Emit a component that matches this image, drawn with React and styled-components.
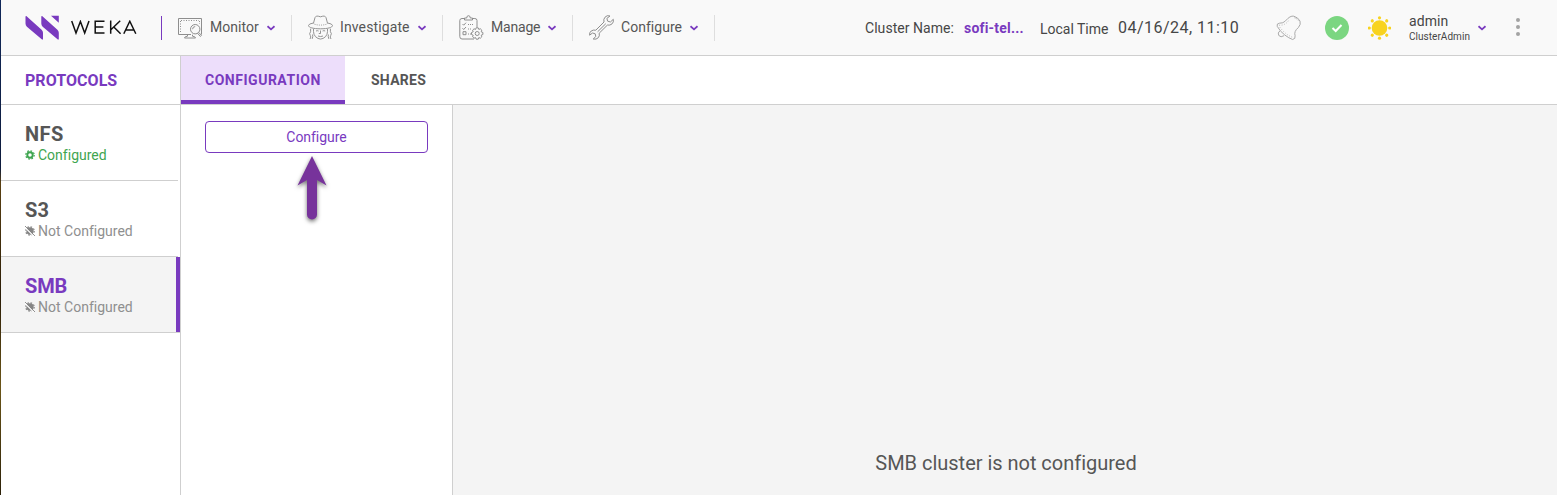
import React from "react";
import styled, { createGlobalStyle, css } from "styled-components";

const purple = "#793abf";
const line = "#cfcfcf";

const Global = createGlobalStyle`
  * { box-sizing: border-box; }
  body { margin: 0; background: #fff; font-family: Roboto, "Noto Sans", sans-serif; color: #565656; overflow: hidden; }
  svg { display: block; flex: none; }
`;

const Page = styled.div`
  display: flex;
  flex-direction: column;
  height: 495px;
  border-left: 1px solid;
  border-image: linear-gradient(#10285a 0, #0d1b3c 34%, #5a4012 37%, #2a1c06 60%, #6b5518 78%, #2b2008 100%) 1;
`;

const Header = styled.header`
  display: flex;
  align-items: center;
  height: 56px;
  flex: none;
  background: #f9f9f9;
  border-bottom: 1px solid ${line};
`;

const Brand = styled.div`
  display: flex;
  align-items: center;
  width: 161px;
  height: 24px;
  padding-left: 24px;
  gap: 12px;
  border-right: 1px solid ${purple};
`;

const Nav = styled.nav`
  display: flex;
  align-items: center;
`;

const NavItem = styled.div`
  display: flex;
  align-items: center;
  width: ${(p) => p.$width}px;
  height: 26px;
  padding-left: 16px;
  border-right: 1px solid #dedede;
`;

const NavLabel = styled.span`
  width: ${(p) => p.$width}px;
  margin: 0 0 2px 7px;
  font-size: 14px;
  line-height: 20px;
  letter-spacing: ${(p) => p.$spacing}px;
  white-space: nowrap;
`;

const Status = styled.div`
  display: flex;
  align-items: flex-start;
  margin-left: 150px;
  padding-top: 2px;
  line-height: 24px;
  white-space: nowrap;
  color: #464646;
`;

const ClusterLabel = styled.span`
  width: 99px;
  font-size: 14px;
  letter-spacing: 0.05px;
`;

const ClusterName = styled.span`
  width: 76px;
  font-size: 14px;
  font-weight: 700;
  letter-spacing: 0.2px;
  color: ${purple};
`;

const TimeLabel = styled.span`
  width: 78px;
  padding-top: 1px;
  font-size: 14px;
  letter-spacing: -0.02px;
`;

const TimeValue = styled.span`
  width: 158px;
  font-size: 16px;
  letter-spacing: 0.48px;
`;

const Tools = styled.div`
  display: flex;
  align-items: center;
`;

const BellSlot = styled.div`
  margin-right: 23px;
`;

const HealthSlot = styled.div`
  margin-right: 19px;
`;

const User = styled.div`
  display: flex;
  flex-direction: column;
  width: 69px;
  margin: 2px 0 0 18px;
  color: #464646;
`;

const UserName = styled.span`
  font-size: 14px;
  line-height: 17px;
  letter-spacing: 0.1px;
`;

const UserRole = styled.span`
  font-size: 10px;
  line-height: 14px;
  letter-spacing: 0.04px;
`;

const MenuSlot = styled.div`
  margin-left: 30px;
`;

const Body = styled.div`
  display: flex;
  flex: 1;
  min-height: 0;
`;

const Sidebar = styled.aside`
  width: 180px;
  flex: none;
  border-right: 1px solid ${line};
`;

const SideTitle = styled.div`
  height: 49px;
  padding-left: 24px;
  border-bottom: 1px solid ${line};
  font-size: 16px;
  font-weight: 700;
  line-height: 49px;
  letter-spacing: 0.05px;
  color: ${purple};
`;

const Protocol = styled.div`
  height: 76px;
  padding: 17px 0 0 24px;
  border-bottom: 1px solid ${line};
  ${(p) =>
    p.$active
      ? css`
          background: #f4f4f4;
          box-shadow: inset -4px 0 ${purple};
        `
      : css`
          margin-right: 2px;
        `}
`;

const ProtocolName = styled.div`
  font-size: 20px;
  font-weight: 700;
  line-height: 24px;
  letter-spacing: ${(p) => p.$spacing}px;
  color: ${(p) => (p.$active ? purple : "#565656")};
`;

const ProtocolState = styled.div`
  display: flex;
  align-items: center;
  gap: 3px;
  font-size: 14px;
  line-height: 18px;
  letter-spacing: 0.01px;
  color: ${(p) => (p.$ok ? "#3fa550" : "#8f8f8f")};
`;

const Main = styled.main`
  display: flex;
  flex: 1;
  flex-direction: column;
`;

const Tabs = styled.div`
  display: flex;
  height: 49px;
  border-bottom: 1px solid ${line};
`;

const Tab = styled.div`
  width: ${(p) => p.$width}px;
  padding-left: ${(p) => p.$pad}px;
  font-size: 14px;
  font-weight: 700;
  line-height: 49px;
  letter-spacing: ${(p) => p.$spacing}px;
  ${(p) =>
    p.$active &&
    css`
      color: ${purple};
      background: #eddefb;
      border-bottom: 4px solid ${purple};
    `}
`;

const Content = styled.div`
  display: flex;
  flex: 1;
`;

const Panel = styled.section`
  display: flex;
  flex-direction: column;
  align-items: center;
  width: 272px;
  padding: 16px 24px;
  border-right: 1px solid ${line};
`;

const ConfigureButton = styled.button`
  width: 223px;
  height: 32px;
  flex: none;
  padding: 0;
  border: 1px solid ${purple};
  border-radius: 4px;
  background: #fff;
  color: ${purple};
  font: 400 14px/30px Roboto, sans-serif;
  letter-spacing: -0.05px;
`;

const Pointer = styled.svg`
  margin: 1px 9px 0 0;
  filter: drop-shadow(0 2px 2px rgba(0, 0, 0, 0.55));
`;

const Empty = styled.section`
  display: flex;
  flex: 1;
  align-items: flex-end;
  justify-content: center;
  padding: 0 0 19px 2px;
  background: #f4f4f4;
  font-size: 20px;
  line-height: 26px;
  letter-spacing: -0.02px;
`;

const Logo = () => (
  <svg width="34" height="25" viewBox="0 0 34 25" fill={purple}>
    <path d="M.5 1.7Q.5.9 1.3 1L16.6 14.8Q18 16.1 18 17.8V24.5H17L1.9 11.7Q.5 10.5.5 8.5ZM16.3 1.7Q16.3.9 17.1 1L32.4 14.8Q33.8 16.1 33.8 17.8V24.5H32.8L17.7 11.7Q16.3 10.5 16.3 8.5ZM26 .8H33.8V7.8Z" />
  </svg>
);

const Wordmark = () => (
  <svg width="66" height="15" viewBox="0 0 66 15" fill="none" stroke="#111" strokeWidth="1.5">
    <path d="m.7 1 4.3 12L9.4 1.5 13.7 13l4.3-12M33.5 1.2h-9.3v11.9h9.3M24.2 7h8.2M39.7.5v13.3M49.2.8l-9.3 9M42.8 7l6.8 6.8M52.8 13.8l6-12.5 6 12.5M55 10h7.7" />
  </svg>
);

const Chevron = () => (
  <svg width="8" height="6" viewBox="0 0 8 6" fill="none" stroke={purple} strokeWidth="1.8">
    <path d="m.5 1.2 3.5 3.2 3.5-3.2" />
  </svg>
);

const iconProps = { fill: "none", stroke: "#8e8e8e", strokeWidth: 1, strokeLinejoin: "round" };

const MonitorIcon = () => (
  <svg width="25" height="24" viewBox="0 0 25 24" {...iconProps}>
    <path d="M13 18.5H.5v-16h23v16M9.5 18.5v1.7q-3 .3-3 1.8h11q0-1.5-3-1.8v-1.5" />
    <path d="M3 4.5h18M2.5 5v11M21.5 5v3" strokeDasharray="1 1.5" />
    <circle cx="17.2" cy="13.2" r="4.7" fill="#f9f9f9" />
    <path d="M14.6 13.2a2.6 2.6 0 0 1 2.6-2.6M20.7 16.4l2.8 3-1.2 1-2.8-3.2" />
  </svg>
);

const InvestigateIcon = () => (
  <svg width="25" height="25" viewBox="0 0 25 25" {...iconProps} strokeWidth="0.95">
    <path d="M5.4 8.5 7 2.6Q8.2.2 10.3 1.2q2.2 1.2 4.4 0Q16.8.2 18 2.6l1.6 5.9" />
    <path d="M5.4 8Q.5 8.8.5 10.5c0 2 4.8 3.3 12 3.3s12-1.3 12-3.3q0-1.7-4.9-2.5" />
    <path d="M6.5 9.2q6 1.8 12 0" strokeDasharray="1 1.2" />
    <path d="M5.5 13.8v2.7q0 3 2 5.2 5 4.7 10 0 2-2.2 2-5.2v-2.7M12.5 15.5v3h-1.7M10 21q2.5 1.1 5 0M8 16q1.3-.7 2.6 0M14.6 16q1.3-.7 2.6 0M2.6 13.7v3q-1.8 2-.3 3.8 1.2 1.3-.3 3.5M22.4 13.7v3q1.8 2 .3 3.8-1.2 1.3.3 3.5M4.6 19.5q.5 2-.4 4.4M20.4 19.5q-.5 2 .4 4.4" />
  </svg>
);

const ManageIcon = () => (
  <svg width="25" height="25" viewBox="0 0 25 25" {...iconProps}>
    <path d="M5.5 3.5H3Q.8 3.5.8 5.5v16Q.8 24 3 24h12M13.5 3.5h2.3Q18 3.5 18 5.5V12M5.5 5V3h2.2q0-2.3 1.8-2.3T11.3 3h2.2v2ZM3.5 9l1.2 1.2L7 7.7M3.5 13.2l1.2 1.3L7 12M4 16.7h3v3H4Z" />
    <path d="M9 9.5h6M9 14h3M9 19h3" strokeDasharray="1 1" />
    <path d="m17.2 12.7 2 .1.6 1.6 1.6-.6 1.4 1.4-.6 1.6 1.7.7v2l-1.7.7.6 1.6-1.4 1.4-1.6-.6-.6 1.6h-2l-.6-1.6-1.6.6-1.4-1.4.6-1.6-1.7-.7v-2l1.7-.7-.6-1.6 1.4-1.4 1.6.6Z" />
    <circle cx="18.2" cy="18.5" r="2" />
  </svg>
);

const WrenchIcon = () => (
  <svg width="25" height="25" viewBox="0 0 25 25" {...iconProps}>
    <path d="M21 1q-3-1.2-5 1.2-1.8 2-1 4.8L6.8 15.2Q4.2 14.6 2.2 16 .2 17.6.6 20.2L3.5 18l2.7.8.6 2.7L4.2 24q3 .8 5-1.2 1.7-1.8 1-4.6l8.2-8.1q2.7.5 4.6-1.2 2-1.8 1.3-4.6L21.4 7l-2.8-.9-.7-2.7Z" />
    <path d="m8.6 16.8 8.2-8.1" />
  </svg>
);

const BellIcon = () => (
  <svg width="26" height="26" viewBox="0 0 26 26" {...iconProps} stroke="#aaa">
    <path d="M1.2 11.3Q.4 8.4 3.5 8.2q3.7.2 6-2.3Q14.2.3 17.8 1.2q4.3 1.2 6.2 4.8 1.2 3.4-1.6 6.5-4.8 4-3.3 8.2.6 3.4-2.5 3.8-3.7-1.3-7.8-4.5Q4.2 16.6 1.2 11.3Z" />
    <path d="M3 10.2q6 .5 9.5-4.5M3.8 12.2q5.7 7.5 12.8 10.1" strokeDasharray="1 1.5" strokeWidth="0.8" />
    <path d="M3.8 16Q1.2 17.7 2.8 20.5q2 2.4 5.2.2" />
    <path d="M18.5 2.8q2.3.7 3.8 2.7" strokeDasharray="1 1" />
  </svg>
);

const CheckIcon = () => (
  <svg width="24" height="24" viewBox="0 0 24 24">
    <circle cx="12" cy="12" r="12" fill="#7bd681" />
    <path d="m7.5 12 3.2 3 5.8-6" fill="none" stroke="#fff" strokeWidth="2" />
  </svg>
);

const SunIcon = () => (
  <svg width="23" height="24" viewBox="0.5 0 23 24" fill="#f8d31f">
    <circle cx="12" cy="12" r="7.8" />
    {[0, 45, 90, 135, 180, 225, 270, 315].map((a) => (
      <circle key={a} cx="12" cy="1.8" r="1.6" transform={`rotate(${a} 12 12)`} />
    ))}
  </svg>
);

const DotsIcon = () => (
  <svg width="4" height="20" viewBox="0 0 4 20" fill="#a3a3a3">
    <circle cx="2" cy="2" r="2" />
    <circle cx="2" cy="9" r="2" />
    <circle cx="2" cy="16" r="2" />
  </svg>
);

const StateIcon = ({ off }) => (
  <svg width="10" height="10" viewBox="0 0 10 10" fill="none" stroke={off ? "#858585" : "#3fa550"}>
    <circle cx="5" cy="5" r="2.7" strokeWidth="1.9" fill={off ? "#858585" : "none"} />
    <circle cx="5" cy="5" r="4.2" strokeWidth="1.2" strokeDasharray="1.65 1.65" />
    {off && <path d="m0 1.4 8.6 8.6" stroke="#fff" strokeWidth="1.1" />}
    {off && <path d="m0 0 10 10" strokeWidth=".9" />}
  </svg>
);

const navItems = [
  { label: "Monitor", Icon: MonitorIcon, width: 130, text: 57, spacing: 0.05 },
  { label: "Investigate", Icon: InvestigateIcon, width: 151, text: 78, spacing: 0.12 },
  { label: "Manage", Icon: ManageIcon, width: 130, text: 57, spacing: -0.2 },
  { label: "Configure", Icon: WrenchIcon, width: 142, text: 69, spacing: 0.03 },
];

const protocols = [
  { name: "NFS", ok: true, spacing: 0.4 },
  { name: "S3", spacing: 0.2 },
  { name: "SMB", active: true, spacing: -0.1 },
];

export default function App() {
  return (
    <Page>
      <Global />
      <Header>
        <Brand>
          <Logo />
          <Wordmark />
        </Brand>
        <Nav>
          {navItems.map(({ label, Icon, width, text, spacing }) => (
            <NavItem key={label} $width={width}>
              <Icon />
              <NavLabel $width={text} $spacing={spacing}>{label}</NavLabel>
              <Chevron />
            </NavItem>
          ))}
        </Nav>
        <Status>
          <ClusterLabel>Cluster Name:</ClusterLabel>
          <ClusterName>sofi-tel...</ClusterName>
          <TimeLabel>Local Time</TimeLabel>
          <TimeValue>04/16/24, 11:10</TimeValue>
        </Status>
        <Tools>
          <BellSlot>
            <BellIcon />
          </BellSlot>
          <HealthSlot>
            <CheckIcon />
          </HealthSlot>
          <SunIcon />
          <User>
            <UserName>admin</UserName>
            <UserRole>ClusterAdmin</UserRole>
          </User>
          <Chevron />
          <MenuSlot>
            <DotsIcon />
          </MenuSlot>
        </Tools>
      </Header>
      <Body>
        <Sidebar>
          <SideTitle>PROTOCOLS</SideTitle>
          {protocols.map(({ name, ok, active, spacing }) => (
            <Protocol key={name} $active={active}>
              <ProtocolName $active={active} $spacing={spacing}>{name}</ProtocolName>
              <ProtocolState $ok={ok}>
                <StateIcon off={!ok} />
                {ok ? "Configured" : "Not Configured"}
              </ProtocolState>
            </Protocol>
          ))}
        </Sidebar>
        <Main>
          <Tabs>
            <Tab $active $width={164} $pad={24} $spacing={0.52}>CONFIGURATION</Tab>
            <Tab $width={106} $pad={26} $spacing={0.25}>SHARES</Tab>
          </Tabs>
          <Content>
            <Panel>
              <ConfigureButton>Configure</ConfigureButton>
              <Pointer width="32" height="70" viewBox="0 0 32 70" fill="#77339b">
                <path d="M16 2 30.5 31.5l-9.5-5.5V60.5a5 5 0 0 1-10 0V26L1.5 31.5Z" />
              </Pointer>
            </Panel>
            <Empty>SMB cluster is not configured</Empty>
          </Content>
        </Main>
      </Body>
    </Page>
  );
}
